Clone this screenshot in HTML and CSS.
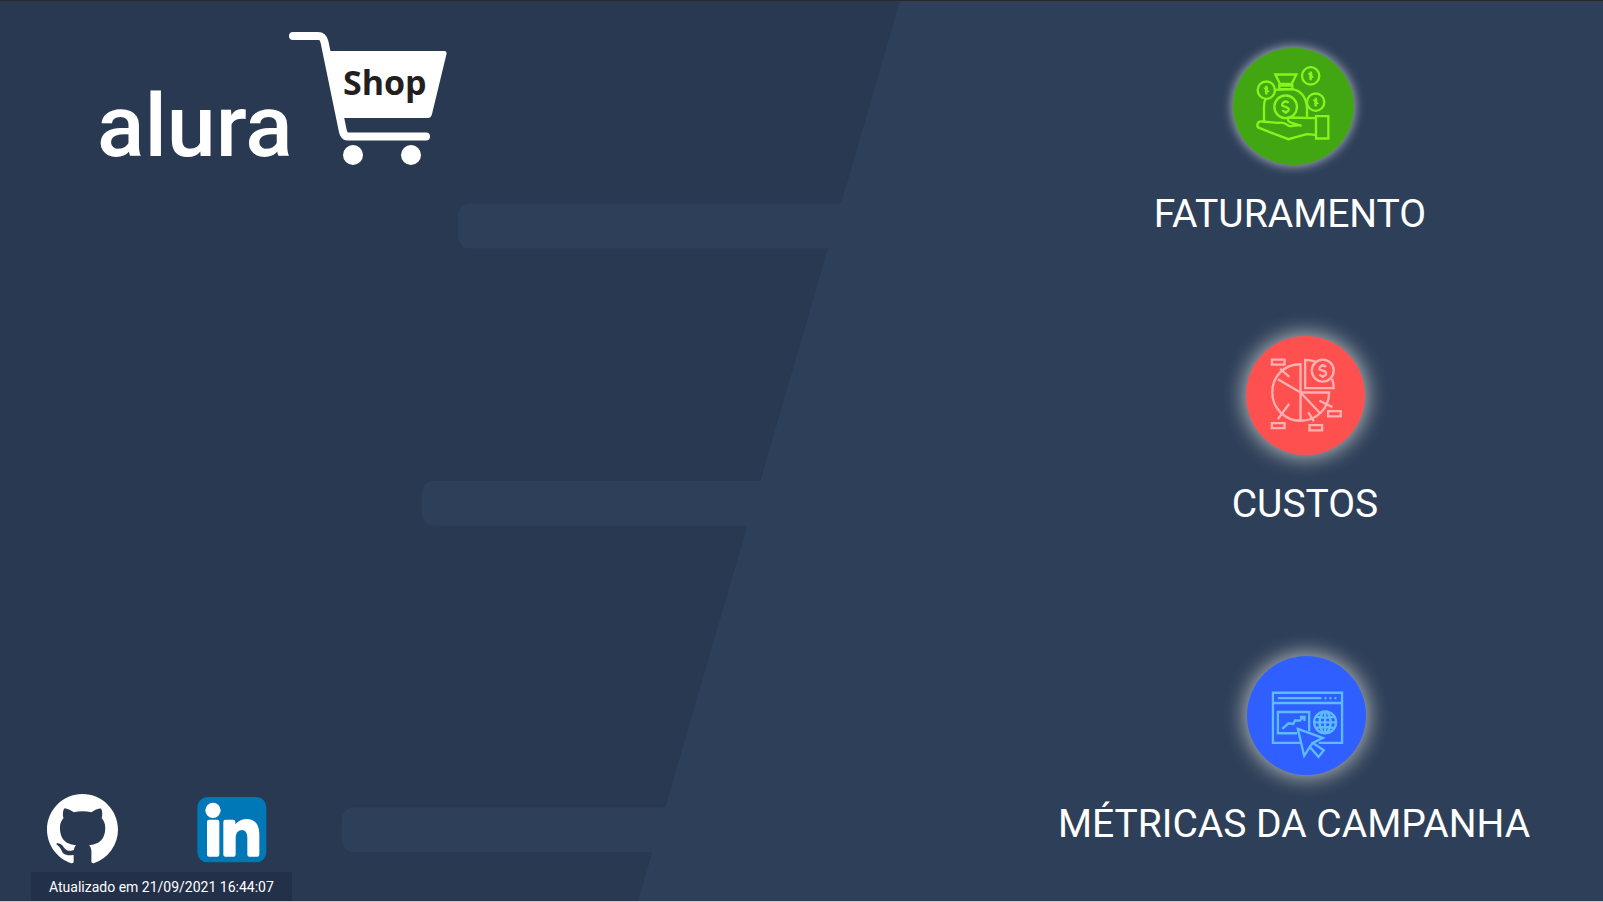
FILE: index.html
```html
<!DOCTYPE html>
<html lang="pt-BR">
<head>
<meta charset="utf-8">
<meta name="viewport" content="width=device-width, initial-scale=1">
<title>Alura Shop</title>
<link rel="stylesheet" href="styles.css">
</head>
<body>
<div class="page">
  <svg class="backdrop" viewBox="0 0 1603 902" preserveAspectRatio="none" aria-hidden="true">
    <path d="M900 0H1603V902H638Z"/>
    <path d="M470 203H860V248H470a12 12 0 0 1-12-12V215a12 12 0 0 1 12-12Z"/>
    <path d="M434 481H780V526H434a12 12 0 0 1-12-12V493a12 12 0 0 1 12-12Z"/>
    <path d="M354 808H680V853H354a12 12 0 0 1-12-12V820a12 12 0 0 1 12-12Z"/>
  </svg>

  <header class="brand">
    <svg class="logo" viewBox="0 0 370 160" role="img" aria-label="alura Shop">
      <text class="logo-name" x="7" y="136">alura</text>
      <path class="logo-cart" d="M203 16H228C232 16 233.500 18 234.500 22L252 107C253 113 254 116.500 258 116.500H336"/>
      <path class="logo-basket" d="M236 31H354Q357 31 356.500 34L342 94Q341 98 338 98H250Z"/>
      <circle class="logo-wheel" cx="263" cy="135" r="10"/>
      <circle class="logo-wheel" cx="321" cy="135" r="10"/>
      <text class="logo-shop" x="253" y="75">Shop</text>
    </svg>
  </header>

  <nav class="menu" aria-label="Painéis">
    <a class="card card-revenue" href="#faturamento">
      <svg class="badge badge-green" viewBox="39 40 363 350" aria-hidden="true">
        <g class="strokes green-line">
          <path d="M166 119H229L215 147H180ZM178 152H217M178 147V163H217V147"/>
          <path d="M132 262V215Q132 201 137 192M161 165L217 163Q258 171 261 220V246"/>
          <circle cx="139" cy="166" r="26"/>
          <circle cx="272" cy="123" r="26"/>
          <circle cx="287" cy="202" r="26"/>
          <circle cx="197" cy="216" r="34"/>
          <path d="M286 250L207 248Q198 260 217 265L245 273M238 271L218 273Q208 276 202 270Q190 261 174 264L128 260C110 257 108 276 119 280L205 313L260 298L287 300"/>
          <path d="M288 244H325V311H288Z"/>
          <path d="M206 204Q198 197 190 203C181 214 190 214 197 216C207 219 210 225 201 231Q192 233 187 226M197 196V204M197 229V237"/>
          <path d="M144 159L136 161L143 169L135 172M139 153V179M277 116L269 118L276 126L268 129M272 110V136M292 195L284 197L291 205L283 208M287 189V215"/>
        </g>
      </svg>
      <span class="label">FATURAMENTO</span>
    </a>
    <a class="card card-costs" href="#custos">
      <svg class="badge badge-red" viewBox="48 47 358 358" aria-hidden="true">
        <g class="strokes red-line">
          <path d="M212 132C160 132 127 171 127 217S165 302 212 302S298 266 298 217H212ZM212 217V302M212 217L144 177M212 217L269 277"/>
          <path d="M257 124Q240 119 226 119V204H312Q312 190 307 176"/>
          <circle cx="279" cy="151" r="33"/>
          <path d="M289 140Q281 133 273 138C263 150 273 149 280 151C291 154 292 164 283 167Q275 170 269 163M279 131V138M279 166V173"/>
          <path d="M151 146L178 170M178 251L144 297M269 242L308 261M235 276L252 304"/>
          <path d="M126 118H164V133H126ZM126 309H164V324H126ZM239 315H277V331H239ZM295 273H333V289H295Z"/>
        </g>
      </svg>
      <span class="label">CUSTOS</span>
    </a>
    <a class="card card-metrics" href="#metricas">
      <svg class="badge badge-blue" viewBox="48 45 358 357" aria-hidden="true">
        <g class="strokes blue-line">
          <path d="M212 306H126V155H334V306H264M126 186H334M141 171H272M281 171H287M296 171H302M311 171H317"/>
          <path d="M199 277H141V213H235V271M154 264L173 247L187 249L193 238L207 239L219 228M207 228H221V240"/>
          <circle cx="283" cy="244" r="33"/>
          <path d="M283 211V277M250 244H316M256 227Q283 233 310 227M256 261Q283 255 310 261M278 211Q254 244 278 277M288 211Q312 244 288 277"/>
          <path d="M201 264L276 291L246 306L279 328L263 348L237 318L220 345ZM246 306L237 318"/>
        </g>
      </svg>
      <span class="label">MÉTRICAS DA CAMPANHA</span>
    </a>
  </nav>

  <footer class="foot">
    <div class="social">
      <a href="#github" aria-label="GitHub">
        <svg class="social-icon" viewBox="0 0 16 16" aria-hidden="true"><path fill="#fff" d="M8 0C3.580 0 0 3.580 0 8c0 3.540 2.290 6.530 5.470 7.590.4.070.55-.17.55-.38 0-.19-.01-.82-.01-1.490-2.010.37-2.530-.49-2.690-.94-.09-.23-.48-.94-.82-1.130-.28-.15-.68-.52-.01-.53.63-.01 1.080.58 1.230.82.72 1.210 1.870.87 2.330.66.07-.52.28-.87.51-1.070-1.780-.2-3.640-.89-3.640-3.950 0-.87.31-1.590.82-2.150-.08-.2-.36-1.020.08-2.120 0 0 .67-.21 2.200.82.64-.18 1.320-.27 2-.27s1.360.09 2 .27c1.530-1.040 2.200-.82 2.200-.82.44 1.100.16 1.920.08 2.120.51.56.82 1.270.82 2.150 0 3.070-1.870 3.750-3.650 3.950.29.25.54.73.54 1.480 0 1.070-.01 1.930-.01 2.200 0 .21.15.46.55.38A8.010 8.010 0 0 0 16 8c0-4.420-3.580-8-8-8Z"/></svg>
      </a>
      <a href="#linkedin" aria-label="LinkedIn">
        <svg class="social-icon" viewBox="529 44 213 213" aria-hidden="true">
          <rect x="533" y="53" width="207" height="196" rx="30" fill="#0077b7"/>
          <g fill="#fff">
            <circle cx="580" cy="93" r="23"/>
            <rect x="562" y="121" width="37" height="111" rx="6"/>
            <path d="M617 121H641Q647 121 647 128V135Q660 119 684 119C711 121 719 142 719 168V226Q719 232 713 232H689Q683 232 683 226V177Q683 152 666 152Q648 153 648 177V226Q648 232 642 232H617Q611 232 611 226V127Q611 121 617 121Z"/>
          </g>
        </svg>
      </a>
    </div>
    <p class="updated">Atualizado em 21/09/2021 16:44:07</p>
  </footer>
</div>
</body>
</html>
```
FILE: styles.css
```css
* {
  box-sizing: border-box;
}

body {
  margin: 0;
  background: #293951;
  color: #fff;
  font-family: Roboto, "Liberation Sans", sans-serif;
}

.page {
  position: relative;
  min-height: 100vh;
  display: grid;
  grid-template-columns: minmax(0, 985fr) minmax(0, 618fr);
  grid-template-rows: 1fr auto;
  border-top: 1px solid #292929;
  border-bottom: 1px solid #c4c8cf;
}

.backdrop {
  position: absolute;
  inset: 0;
  width: 100%;
  height: 100%;
  fill: #2e3f59;
}

.brand,
.menu,
.foot {
  position: relative;
}

.brand {
  padding: 19px 0 0 90px;
}

.logo {
  display: block;
  width: 370px;
  height: 160px;
}

.logo-name {
  font: 500 88px Roboto, "Liberation Sans", sans-serif;
  fill: #fff;
}

.logo-cart {
  fill: none;
  stroke: #fff;
  stroke-width: 8;
  stroke-linecap: round;
  stroke-linejoin: round;
}

.logo-basket,
.logo-wheel {
  fill: #fff;
}

.logo-shop {
  font: 700 34px "Open Sans", sans-serif;
  fill: #231f20;
}

.menu {
  grid-column: 2;
  grid-row: 1 / 3;
  display: grid;
  grid-template-rows: 288fr 320fr 245fr;
  padding-top: 47px;
}

.card {
  display: flex;
  flex-direction: column;
  align-items: center;
  gap: 27px;
  color: #fff;
  text-decoration: none;
}

.card-revenue {
  padding-right: 8px;
}

.card-costs {
  padding-left: 22px;
}

.badge {
  width: 119px;
  height: 119px;
  border-radius: 50%;
  box-shadow: 0 0 20px 3px rgba(255, 255, 240, 0.6);
}

.badge-green {
  width: 121px;
  height: 117px;
  margin-left: 6px;
  background: #41a612;
  box-shadow: 0 0 10px 2px rgba(255, 255, 255, 0.5);
}

.badge-red {
  background: #ff5050;
}

.badge-blue {
  margin-left: 24px;
  background: #2f5fff;
}

.strokes {
  fill: none;
  stroke-width: 7;
}

.green-line {
  stroke: #85f51b;
}

.red-line {
  stroke: #ffb0b0;
}

.blue-line {
  stroke: #5cbcff;
}

.label {
  font-size: 39px;
  line-height: 44px;
  white-space: nowrap;
}

.foot {
  grid-column: 1;
  padding-left: 31px;
}

.social {
  display: flex;
  gap: 78px;
  padding: 0 0 7px 16px;
}

.social-icon {
  display: block;
  width: 71px;
  height: 71px;
}

.updated {
  width: fit-content;
  margin: 0;
  padding: 1px 18px 0;
  background: #22304a;
  font-size: 14px;
  line-height: 28px;
}
```
